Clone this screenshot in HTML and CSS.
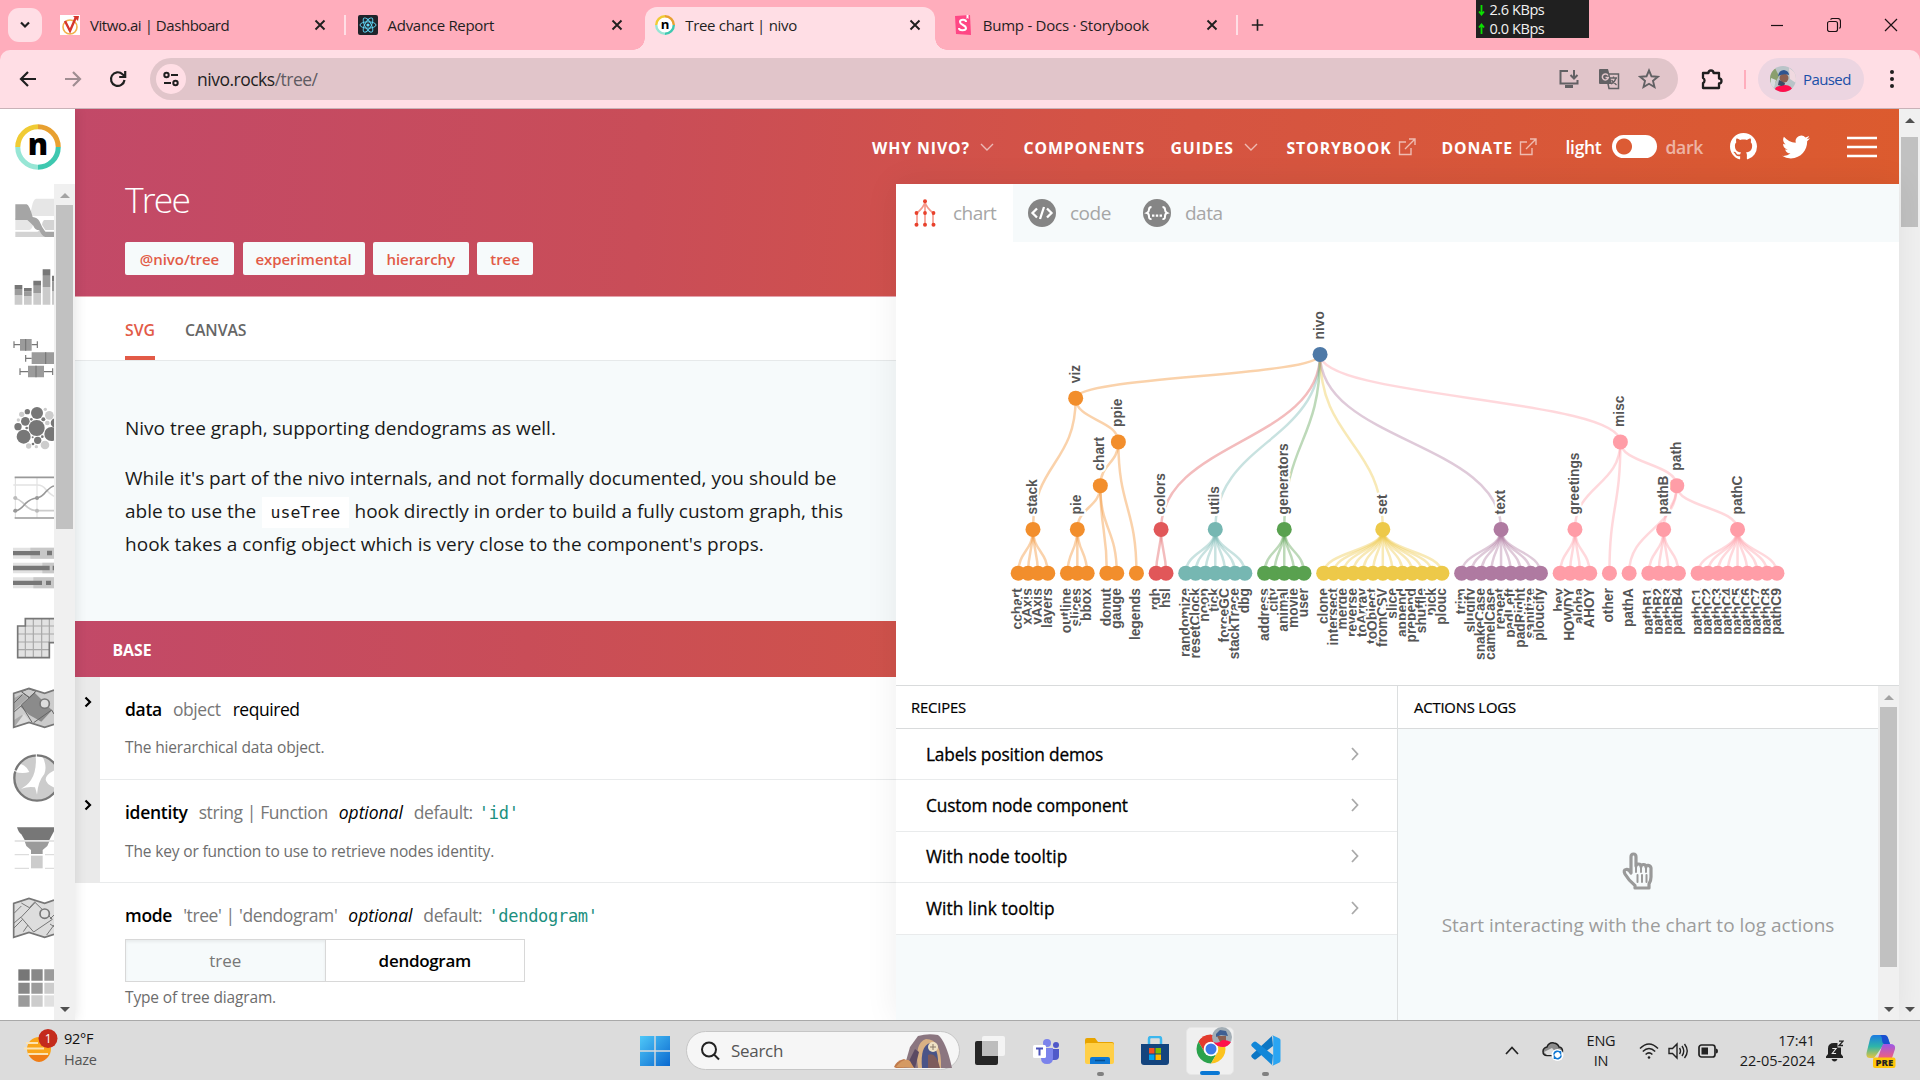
FILE: index.html
```html
<!DOCTYPE html>
<html lang="en">
<head>
<meta charset="utf-8">
<title>Tree chart | nivo</title>
<link rel="stylesheet" href="styles.css">
</head>
<body>
<div class="screen">

<!-- Tab strip -->
<header class="tabstrip">
  <div class="tab-search"><svg width="12" height="8" viewBox="0 0 12 8"><path d="M2 1.5l4 4 4-4" fill="none" stroke="#1f1f1f" stroke-width="2.2"/></svg></div>
  <div class="tab">
    <svg class="fav" viewBox="0 0 20 20"><rect width="20" height="20" fill="#fff"/><circle cx="10" cy="12" r="7" fill="none" stroke="#f2b04a" stroke-width="1.6"/><path d="M5 6l5 10 6-14" fill="none" stroke="#d5352c" stroke-width="2.4"/><path d="M13 1l6 0-1 5z" fill="#d5352c"/></svg>
    <span class="tab-title t1">Vitwo.ai | Dashboard</span>
    <svg class="x" viewBox="0 0 12 12"><path d="M1.5 1.5l9 9M10.500 1.500l-9 9"/></svg>
    <i class="sep"></i>
  </div>
  <div class="tab">
    <svg class="fav" viewBox="0 0 20 20"><rect width="20" height="20" rx="2" fill="#20232a"/><g fill="none" stroke="#61dafb" stroke-width=".9"><ellipse cx="10" cy="10" rx="8" ry="3.200"/><ellipse cx="10" cy="10" rx="8" ry="3.2" transform="rotate(60 10 10)"/><ellipse cx="10" cy="10" rx="8" ry="3.2" transform="rotate(120 10 10)"/></g><circle cx="10" cy="10" r="1.6" fill="#61dafb"/></svg>
    <span class="tab-title t2">Advance Report</span>
    <svg class="x" viewBox="0 0 12 12"><path d="M1.5 1.5l9 9M10.5 1.5l-9 9"/></svg>
  </div>
  <div class="tab active">
    <svg class="fav" viewBox="0 0 50 50"><circle cx="25" cy="25" r="20" fill="#fff"/><g fill="none" stroke-width="6"><path d="M3 25A22 22 0 0 1 25 3" stroke="#f0cb34"/><path d="M25 3A22 22 0 0 1 47 25" stroke="#e8a030"/><path d="M47 25A22 22 0 0 1 25 47" stroke="#3ec8b0"/><path d="M25 47A22 22 0 0 1 3 25" stroke="#97e6d5"/></g><text x="25" y="35" class="logo-n">n</text></svg>
    <span class="tab-title t3">Tree chart | nivo</span>
    <svg class="x" viewBox="0 0 12 12"><path d="M1.5 1.5l9 9M10.5 1.5l-9 9"/></svg>
  </div>
  <div class="tab">
    <svg class="fav" viewBox="0 0 20 20"><path d="M2 1l15-1 1 20-15-1z" fill="#ff4785"/><path d="M13.500 0h2v4l-1-1-1 1z" fill="#fff"/><path d="M13 7c0-3-6-3-6 0s6 3 6 6-7 3-7 0" fill="none" stroke="#fff" stroke-width="2"/></svg>
    <span class="tab-title t4">Bump - Docs · Storybook</span>
    <svg class="x" viewBox="0 0 12 12"><path d="M1.5 1.5l9 9M10.5 1.5l-9 9"/></svg>
    <i class="sep"></i>
  </div>
  <svg class="plus" width="16" height="16" viewBox="0 0 16 16"><path d="M8 1v14M1 8h14" stroke="#1f1f1f" stroke-width="2"/></svg>
  <div class="net">
    <div><svg width="7" height="12" viewBox="0 0 7 12"><path d="M3.500 1v9M1 7.500l2.500 3L6 7.500"/></svg><span>2.6 KBps</span></div>
    <div><svg width="7" height="12" viewBox="0 0 7 12"><path d="M3.500 11V2M1 4.500l2.500-3L6 4.500"/></svg><span>0.0 KBps</span></div>
  </div>
  <div class="win">
    <svg width="14" height="14" viewBox="0 0 14 14"><path d="M1 7.500h12"/></svg>
    <svg width="14" height="14" viewBox="0 0 14 14"><rect x=".5" y="3.500" width="10" height="10" rx="2"/><path d="M3.500 1.500q1-1 2-1h5q3 0 3 3v5q0 1-1 2"/></svg>
    <svg width="14" height="14" viewBox="0 0 14 14"><path d="M1 1l12 12M13 1L1 13"/></svg>
  </div>
</header>

<!-- Address bar -->
<div class="toolbar">
  <div class="navbtns">
    <svg width="20" height="20" viewBox="0 0 20 20"><path d="M18 10H3M10 3l-7 7 7 7"/></svg>
    <svg class="dim" width="20" height="20" viewBox="0 0 20 20"><path d="M2 10h15M10 3l7 7-7 7"/></svg>
    <svg width="20" height="20" viewBox="0 0 20 20"><path d="M16.500 11A6.800 6.800 0 1 1 14.500 5.200L17 7.500M17.200 2v6h-6"/></svg>
  </div>
  <div class="omnibox">
    <div class="site"><svg width="18" height="18" viewBox="0 0 18 18" fill="none" stroke="#1f1f1f" stroke-width="2"><circle cx="4.500" cy="5" r="2.200"/><path d="M9 5h7M2 13h7"/><circle cx="13.500" cy="13" r="2.200"/></svg></div>
    <div class="url">nivo.rocks<span>/tree/</span></div>
    <div class="omni-icons">
      <svg width="22" height="20" viewBox="0 0 22 20" fill="none" stroke="#626164" stroke-width="2"><path d="M10 2H2.500v12.500h17V11M16 1v8M12.500 6l3.500 3.500L19.500 6"/><path d="M7 17.500h8" stroke-width="3"/></svg>
      <svg width="22" height="22" viewBox="0 0 22 22"><path d="M8 6h12.500v14.500H11z" fill="none" stroke="#626164" stroke-width="1.5"/><path d="M1 2q0-1 1-1h8l4 15H2q-1 0-1-1z" fill="#626164"/><path d="M10 7.500a3 3 0 1 0 .3 2H7.500" stroke="#e1c5ca" stroke-width="1.500" fill="none"/><path d="M12 10h7M15.500 8.500V10M18 10q-1 4-5 6M13.500 12l5 5" stroke="#626164" stroke-width="1.3" fill="none"/></svg>
      <svg width="22" height="22" viewBox="0 0 22 22"><path d="M11 2.500l2.500 5.800 6.300.5-4.800 4.100 1.500 6.200L11 15.800l-5.500 3.300L7 12.900 2.200 8.800l6.300-.5z" fill="none" stroke="#626164" stroke-width="1.900"/></svg>
    </div>
  </div>
  <svg class="ext" width="24" height="24" viewBox="0 0 24 24"><path d="M3 6h5.500a2.500 2.500 0 0 1 5 0H19v5.500a2.500 2.500 0 0 1 0 5V21H3v-5a2.800 2.800 0 0 0 0-5z" fill="none" stroke="#1f1f1f" stroke-width="2.300" stroke-linejoin="round"/></svg>
  <i class="tsep"></i>
  <div class="profile">
    <svg width="26" height="26" viewBox="0 0 26 26"><defs><clipPath id="av"><circle cx="13" cy="13" r="13"/></clipPath></defs><g clip-path="url(#av)"><rect width="26" height="26" fill="#b9c4c8"/><path d="M0 6l5-4 4 8-5 9-4-3z" fill="#8a9f6e"/><path d="M1 12l5 2-2 8-4-3z" fill="#d9dde0"/><path d="M19 2l7 5v10l-6-4z" fill="#f0d9e0"/><circle cx="14" cy="12" r="4.500" fill="#8b5f50"/><path d="M8 10q1-6 6-6 5 1 5 5-5-2-11 1z" fill="#2f5590"/><path d="M9 14l6 3-1 4-6-2z" fill="#3c4c63"/><path d="M4 26q1-7 7-6l4-1q7 0 8 7z" fill="#ff0f4c"/></g></svg>
    <span>Paused</span>
  </div>
  <svg class="kebab" width="6" height="20" viewBox="0 0 6 20"><circle cx="3" cy="3" r="2"/><circle cx="3" cy="10" r="2"/><circle cx="3" cy="17" r="2"/></svg>
</div>

<!-- Page -->
<main class="page">
  <aside class="side">
    <div class="logo"><svg width="46" height="46" viewBox="0 0 50 50"><g fill="none" stroke-width="5.500"><path d="M3 25A22 22 0 0 1 25 3" stroke="#f0cb34"/><path d="M25 3A22 22 0 0 1 47 25" stroke="#e8a030"/><path d="M47 25A22 22 0 0 1 25 47" stroke="#3ec8b0"/><path d="M25 47A22 22 0 0 1 3 25" stroke="#97e6d5"/></g><text x="25" y="34" class="logo-n big">n</text></svg></div>
    <div class="side-scroll">
      <div class="thumbs">
        <svg viewBox="0 12 162 210"><path d="M80 108q12-2 16-30 4-20 12-22h54v52z" fill="#e6e6e6"/><path d="M46 114h40q10 0 14 17-4 19-14 19H46z" fill="#e6e6e6"/><path d="M162 120h-30q-6 6-6 14l10 16h26z" fill="#d3d3d3"/><path d="M46 155h66l12-6 12 6 26 6v10H46z" fill="#d3d3d3"/><path d="M46 73h34q8 2 18 38 14 2 20 12 8 20 18 32h26v16h-26q-10-2-18-20-14-2-18-14-10-10-18-17H46z" fill="#a5a5a5"/></svg>
        <svg viewBox="0 222 162 210"><g fill="#cbcbcb"><path d="M44 346h23v28H44zM72 348h23v26H72zM100 339h23v35h-23zM128 321h23v53h-23zM156 334h6v40h-6z"/></g><g fill="#9b9b9b"><path d="M44 327h23v19H44zM72 334h23v14H72zM100 317h23v22h-23zM128 287h23v34h-23zM156 304h6v30h-6z"/></g><g fill="#777"><path d="M44 315h23v12H44zM72 324h23v10H72zM100 302h23v15h-23zM128 268h23v19h-23zM156 287h6v17h-6z"/></g></svg>
        <svg viewBox="0 432 162 210"><g fill="#9b9b9b"><path d="M60 477h35v35H60zM95 517h67v35H95zM84 557h48v35H84z"/></g><path d="M42 484v20M42 494h18M112 484v20M95 494h17M77 525v20M77 535h18M60 565v20M60 575h24M158 565v20M132 575h26M77 477v35M137 517v35M108 557v35" stroke="#777" stroke-width="3.500"/></svg>
        <svg viewBox="0 642 162 210"><g fill="#777"><circle cx="110" cy="744" r="24"/><circle cx="111" cy="699" r="18"/><circle cx="71" cy="770" r="21"/><circle cx="154" cy="762" r="21"/><circle cx="76" cy="724" r="13"/><circle cx="54" cy="740" r="11"/><circle cx="82" cy="695" r="8"/><circle cx="113" cy="781" r="11"/><circle cx="166" cy="729" r="14"/><circle cx="130" cy="718" r="6"/><circle cx="80" cy="744" r="4"/><circle cx="94" cy="718" r="4"/><circle cx="127" cy="770" r="4"/><circle cx="99" cy="792" r="4"/><circle cx="98" cy="772" r="3"/></g><g fill="#ccc"><circle cx="148" cy="706" r="13"/><circle cx="65" cy="703" r="8"/><circle cx="135" cy="795" r="13"/><circle cx="136" cy="688" r="5"/><circle cx="86" cy="798" r="8"/><circle cx="109" cy="800" r="5"/><circle cx="142" cy="729" r="7"/><circle cx="55" cy="720" r="5"/></g></svg>
        <svg viewBox="0 852 162 210"><g fill="none"><path d="M46 892v122M111 892v122" stroke="#ddd" stroke-width="3"/><path d="M40 915h72q16 0 26 14 12 14 24 20" stroke="#e2e2e2" stroke-width="5"/><path d="M40 954q16 0 36 22 16 16 35 16h51" stroke="#ccc" stroke-width="5"/><path d="M40 993q16 2 36-22 16-16 35-17 14-2 28-20 14-14 23-16" stroke="#999" stroke-width="5"/><path d="M44 892h118M44 1014h118" stroke="#999" stroke-width="5"/></g><g fill="#bbb"><circle cx="46" cy="954" r="6"/><circle cx="111" cy="992" r="6"/></g><g fill="#999"><circle cx="46" cy="992" r="6"/><circle cx="111" cy="954" r="6"/></g></svg>
        <svg viewBox="0 1062 162 210"><path d="M39 1103h123v33H39zM39 1148h123v32H39zM39 1192h123v33H39z" fill="#e2e2e2"/><path d="M91 1103h71v33H91zM127 1148h35v32h-35zM100 1192h62v33h-62z" fill="#c8c8c8"/><path d="M39 1113h81v13H39zM141 1112h15v14h-15zM39 1157h110v14H39zM158 1157h4v14h-4zM39 1202h87v13H39zM138 1202h15v13h-15z" fill="#777"/></svg>
        <svg viewBox="0 42 162 210"><path d="M76 85h86v73h-14v45H53v-96h23z" fill="#e2e2e2"/><path d="M76 108h86M53 132h109M53 156h95M53 179h95M76 108v95M100 86v117M125 86v117M148 86v72" stroke="#a8a8a8" stroke-width="3.500"/><path d="M162 86H76v22H53v95h95v-45h14" fill="none" stroke="#777" stroke-width="5"/></svg>
        <svg viewBox="0 252 162 210"><path d="M41 310l46-15 47 15 28-10v103l-28 9-47-15-46 15z" fill="#ccc"/><path d="M64 345l40-37 52 53-32 34-37-21-25-24z" fill="#8b8b8b"/><path d="M41 325l26-14 16 12-42 40zM66 375l20 22-44 14V390z" fill="#aaa"/><path d="M72 372l22 26-50 12z" fill="#ddd"/><path d="M64 305l22-9 22 8-20 18zM42 366l22-19M41 340l26-26M64 345l40-37M64 345l32 52M155 360l-54 38M155 360l7 12M70 310l18 14 17-18" fill="none" stroke="#666" stroke-width="3"/><path d="M162 300l-28 10-47-15-46 15v102l46-15 47 15 28-9" fill="none" stroke="#777" stroke-width="5"/><circle cx="134" cy="341" r="14" fill="#ddd" stroke="#777" stroke-width="5"/></svg>
        <svg viewBox="0 462 162 210"><circle cx="111" cy="564" r="68" fill="#ccc"/><path d="M107 494q4 50-14 76-12 18-30 26 24-8 42-4 4 12 6 22 3-40 22-62 10-24-8-58zM48 520q28 0 40 26-18 6-44 0zM165 540q-28 14-28 28t28 26z" fill="#fff"/><circle cx="111" cy="564" r="68" fill="none" stroke="#777" stroke-width="7"/><path d="M109 490v14M40 541l14 4" stroke="#fff" stroke-width="3"/></svg>
        <svg viewBox="0 672 162 210"><path d="M51 712h111v12l-14 26H74L64 733q-8-5-13-21z" fill="#777"/><path d="M74 754h74l-6 14-14 12v12H93v-12l-14-12z" fill="#9b9b9b"/><path d="M93 797h35v38H93z" fill="#ccc"/><path d="M44 753h118M44 794h43M44 835h43M135 794h27M135 835h27" stroke="#ddd" stroke-width="4"/></svg>
        <svg viewBox="0 882 162 210"><path d="M41 940l46-15 47 15 28-10v103l-28 9-47-15-46 15z" fill="#ddd"/><path d="M64 939l24 14 17-18M105 938l-42 44 38 44 56-38-53-52M42 970l22-22M41 1000l22-19M42 1014l26-26M70 1025l14-20M162 975l-12 12M162 1010l-12-8M140 1035l22-30" fill="none" stroke="#777" stroke-width="3"/><path d="M162 930l-28 10-47-15-46 15v102l46-15 47 15 28-9" fill="none" stroke="#777" stroke-width="5"/><circle cx="134" cy="971" r="14" fill="#e2e2e2" stroke="#777" stroke-width="5"/></svg>
        <svg viewBox="0 1092 162 210"><path d="M55 1138h34v34H55z" fill="#777"/><path d="M94 1138h34v34H94zM55 1178h34v33H55z" fill="#888"/><path d="M133 1138h29v34h-29zM94 1178h34v33H94zM55 1216h34v34H55z" fill="#9b9b9b"/><path d="M133 1178h29v33h-29zM94 1216h34v34H94z" fill="#ccc"/><path d="M133 1216h29v34h-29z" fill="#e0e0e0"/></svg>
      </div>
      <div class="bar"><i class="up dimmed"></i><i class="thumb side-thumb"></i><i class="down"></i></div>
    </div>
  </aside>

  <div class="site-body">
    <nav class="topnav">
      <span class="nv n1">WHY NIVO?<svg width="14" height="8" viewBox="0 0 14 8"><path d="M1 1l6 6 6-6"/></svg></span>
      <span class="nv n2">COMPONENTS</span>
      <span class="nv n3">GUIDES<svg width="14" height="8" viewBox="0 0 14 8"><path d="M1 1l6 6 6-6"/></svg></span>
      <span class="nv n4">STORYBOOK<svg width="18" height="18" viewBox="0 0 18 18"><path d="M8 4H1.500v12.500H13V10M7 11L16.500 1.500M11 1h6v6"/></svg></span>
      <span class="nv n5">DONATE<svg width="18" height="18" viewBox="0 0 18 18"><path d="M8 4H1.500v12.500H13V10M7 11L16.500 1.500M11 1h6v6"/></svg></span>
      <span class="theme"><b>light</b><i class="switch"></i><b class="off">dark</b></span>
      <svg class="gh" width="27" height="27" viewBox="0 0 16 16"><path fill="#fff" d="M8 0C3.580 0 0 3.580 0 8c0 3.540 2.290 6.530 5.470 7.590.4.070.55-.17.55-.38 0-.19-.01-.82-.01-1.490-2.010.37-2.530-.49-2.690-.94-.09-.23-.48-.94-.82-1.130-.28-.15-.68-.52-.01-.53.63-.01 1.080.58 1.230.82.72 1.210 1.870.87 2.330.66.07-.52.28-.87.51-1.070-1.780-.2-3.640-.89-3.640-3.950 0-.87.31-1.590.82-2.150-.08-.2-.36-1.020.08-2.120 0 0 .67-.21 2.200.82.64-.18 1.320-.27 2-.27s1.360.09 2 .27c1.530-1.040 2.200-.82 2.200-.82.44 1.100.16 1.920.08 2.120.51.56.82 1.270.82 2.150 0 3.070-1.870 3.750-3.650 3.950.29.25.54.73.54 1.480 0 1.070-.01 1.930-.01 2.200 0 .21.15.46.55.38A8.010 8.010 0 0 0 16 8c0-4.420-3.580-8-8-8z"/></svg>
      <svg class="tw" width="28" height="28" viewBox="0 0 24 24"><path fill="#fff" d="M23.950 4.570a10 10 0 0 1-2.820.77 4.960 4.960 0 0 0 2.160-2.720c-.95.550-2 .95-3.130 1.180a4.920 4.920 0 0 0-8.380 4.480C7.690 8.090 4.070 6.130 1.640 3.160a4.820 4.820 0 0 0-.67 2.480c0 1.710.87 3.210 2.190 4.100a4.900 4.900 0 0 1-2.230-.62v.06a4.920 4.920 0 0 0 3.950 4.830 5 5 0 0 1-2.210.08 4.940 4.940 0 0 0 4.600 3.420A9.870 9.870 0 0 1 0 19.540a13.990 13.990 0 0 0 7.550 2.210c9.050 0 14-7.500 14-13.980 0-.21 0-.42-.02-.63a9.940 9.940 0 0 0 2.460-2.550z"/></svg>
      <svg class="burger" width="30" height="22" viewBox="0 0 30 22"><path d="M0 2h30M0 11h30M0 20h30" stroke="#fff" stroke-width="2.400"/></svg>
    </nav>

    <div class="columns">
      <section class="left">
        <div class="hero">
          <h1>Tree</h1>
          <div class="tags"><span class="g1">@nivo/tree</span><span class="g2">experimental</span><span class="g3">hierarchy</span><span class="g4">tree</span></div>
        </div>
        <div class="variants"><span class="on">SVG</span><span class="cv">CANVAS</span></div>
        <div class="intro">
          <p class="p1">Nivo tree graph, supporting dendograms as well.</p>
          <p class="p2"><span class="l1">While it's part of the nivo internals, and not formally documented, you should be</span><br><span class="l2">able to use the </span><code>useTree</code><span class="l3"> hook directly in order to build a fully custom graph, this</span><br><span class="l4">hook takes a config object which is very close to the component's props.</span></p>
        </div>
        <div class="group">BASE</div>
        <div class="prop gutter">
          <svg class="chev" width="8" height="12" viewBox="0 0 8 12"><path d="M1.500 1.500L6 6l-4.500 4.500"/></svg>
          <div class="prop-body">
            <div class="sig d1"><b>data</b><span>object</span><em class="req">required</em></div>
            <p>The hierarchical data object.</p>
          </div>
        </div>
        <div class="prop gutter">
          <svg class="chev" width="8" height="12" viewBox="0 0 8 12"><path d="M1.500 1.500L6 6l-4.500 4.500"/></svg>
          <div class="prop-body second">
            <div class="sig"><b>identity</b><span>string | Function</span><em>optional</em><span>default: <code>'id'</code></span></div>
            <p>The key or function to use to retrieve nodes identity.</p>
          </div>
        </div>
        <div class="prop last">
          <div class="prop-body">
            <div class="sig"><b>mode</b><span>'tree' | 'dendogram'</span><em>optional</em><span>default: <code>'dendogram'</code></span></div>
            <div class="choice"><span>tree</span><b>dendogram</b></div>
            <p>Type of tree diagram.</p>
          </div>
        </div>
      </section>

      <section class="right">
        <div class="ptabs">
          <div class="ptab on"><svg width="22" height="28" viewBox="0 0 22 28"><path d="M11 3v22M11 3Q10 8 3 14v11M11 3q1 5 8 11v11" fill="none" stroke="#f5988b" stroke-width="1.600"/><g fill="#e8412c"><circle cx="11" cy="2.300" r="2"/><circle cx="2.500" cy="14" r="1.900"/><circle cx="11" cy="14" r="1.900"/><circle cx="19.500" cy="14" r="1.900"/><circle cx="2.500" cy="25.800" r="2"/><circle cx="11" cy="25.800" r="2"/><circle cx="19.500" cy="25.800" r="2"/></g></svg><span>chart</span></div>
          <div class="ptab"><svg width="28" height="28" viewBox="0 0 28 28"><circle cx="14" cy="14" r="14" fill="#858585"/><path d="M9 9.500L4.500 14 9 18.500M19 9.500l4.500 4.500-4.500 4.500M16 8l-4 12" fill="none" stroke="#fff" stroke-width="2.300"/></svg><span>code</span></div>
          <div class="ptab"><svg width="28" height="28" viewBox="0 0 28 28"><circle cx="14" cy="14" r="14" fill="#858585"/><path d="M8.500 8Q6 8 6 10.500T4 14q2 .5 2 3.500t2.500 2.500M19.500 8Q22 8 22 10.500T24 14q-2 .5-2 3.500t-2.500 2.500" fill="none" stroke="#fff" stroke-width="2"/><path d="M9 15.500h2.400v2.300H9zM12.800 15.500h2.400v2.300h-2.400zM16.600 15.500H19v2.300h-2.400z" fill="#fff"/></svg><span>data</span></div>
        </div>
        <div class="chart"><svg id="tree" width="1003" height="443" viewBox="896 242 1003 443"></svg></div>
        <div class="bottom">
          <div class="recipes">
            <h2>RECIPES</h2>
            <div class="recipe"><span class="r1">Labels position demos</span><svg width="8" height="14" viewBox="0 0 8 14"><path d="M1 1l5.500 6L1 13"/></svg></div>
            <div class="recipe"><span class="r2">Custom node component</span><svg width="8" height="14" viewBox="0 0 8 14"><path d="M1 1l5.500 6L1 13"/></svg></div>
            <div class="recipe"><span class="r3">With node tooltip</span><svg width="8" height="14" viewBox="0 0 8 14"><path d="M1 1l5.500 6L1 13"/></svg></div>
            <div class="recipe"><span class="r4">With link tooltip</span><svg width="8" height="14" viewBox="0 0 8 14"><path d="M1 1l5.500 6L1 13"/></svg></div>
          </div>
          <div class="logs">
            <h2>ACTIONS LOGS</h2>
            <div class="empty">
              <svg width="34" height="38" viewBox="0 0 34 38" fill="none" stroke="#999" stroke-linejoin="round" stroke-linecap="round"><path d="M10 21V5q0-3 2.500-3T15 5v9q0-2 2.500-2t2.500 2.500q0-2 2.500-2T25 15q0-2 2.300-1.700T30 16v9q0 4-2 7v4H14v-2.500Q8 29 4 22q-2-4 1-4.500 3-.5 5 3.500z" stroke-width="3.200"/><path d="M15 14v6M20 15v5M25 16v4M16.500 23v7M21 23v7M25.500 23v7" stroke-width="2"/></svg>
              <span>Start interacting with the chart to log actions</span>
            </div>
          </div>
          <div class="bar"><i class="up dimmed"></i><i class="thumb log-thumb"></i><i class="down"></i></div>
        </div>
      </section>
    </div>
  </div>
  <div class="bar outer"><i class="up"></i><i class="thumb page-thumb"></i><i class="down"></i></div>
</main>

<!-- Taskbar -->
<footer class="taskbar">
  <div class="weather">
    <svg width="36" height="36" viewBox="0 0 36 36"><circle cx="15" cy="20" r="12" fill="#f9a51a"/><path d="M2 14h12M0 19.500h20M4 25h20" stroke="#fbe3b4" stroke-width="2.200"/><path d="M5 26h20q-4 7-10 7T5 26z" fill="#f07d16"/><circle cx="24" cy="9.500" r="9.500" fill="#c42b1c"/><text x="24" y="14" class="badge">1</text></svg>
    <div><span>92°F</span><span class="gray">Haze</span></div>
  </div>
  <div class="apps">
    <svg width="30" height="30" viewBox="0 0 30 30"><defs><linearGradient id="w" x2="1" y2="1"><stop stop-color="#4fc8f8"/><stop offset="1" stop-color="#0a68cf"/></linearGradient></defs><path d="M0 0h14.300v14.300H0zM15.700 0H30v14.300H15.700zM0 15.700h14.300V30H0zM15.700 15.700H30V30H15.700z" fill="url(#w)"/></svg>
    <div class="search">
      <svg width="20" height="20" viewBox="0 0 20 20" fill="none" stroke="#222" stroke-width="2"><circle cx="9" cy="8.500" r="7"/><path d="M14 13.500l5 5"/></svg>
      <span>Search</span>
      <svg class="art" width="58" height="36" viewBox="0 0 58 36"><path d="M0 34q2-6 10-8l8 4v5H2z" fill="#c07a4c"/><path d="M10 35L16 14 24 3q10-3 20-1 8 6 14 33z" fill="#8b7680"/><path d="M24 35Q20 10 32 6q16 0 15 29z" fill="#d9b184"/><path d="M28 35Q26 13 36 10q9 4 8 25z" fill="#4a5488"/><path d="M34 35V22q8-4 12 13z" fill="#7d5b5c"/><circle cx="39" cy="14" r="5" fill="#efe2c4"/><path d="M36 14h6M39 11v6" stroke="#8a7a6a"/><path d="M14 30l7-14 4 3-4 16z" fill="#5c4a63"/><path d="M2 34q8-10 14-6l4 7z" fill="#d59a63"/></svg>
    </div>
    <svg width="30" height="30" viewBox="0 0 30 30"><rect y="5" width="23" height="24" rx="2" fill="#262626"/><rect x="7" y="0" width="23" height="20" rx="2" fill="#f4f4f4"/><rect x="7" y="5" width="16" height="15" fill="#bdbdbd"/></svg>
    <svg width="28" height="28" viewBox="0 0 28 28"><circle cx="15" cy="6" r="4" fill="#7b83eb"/><circle cx="24" cy="8" r="3" fill="#5059c9"/><path d="M20 12h7v7q0 4-4 4h-3z" fill="#5059c9"/><path d="M9 11h12v10q0 6-6 6t-6-6z" fill="#7b83eb"/><rect x="1" y="8" width="13" height="13" rx="1.500" fill="#fff"/><path d="M4 11.500h7M7.500 11.500v7" stroke="#4b53bc" stroke-width="2"/></svg>
    <div class="app"><svg width="32" height="28" viewBox="0 0 32 28"><path d="M1 3q0-2 2-2h8l3 4h14q2 0 2 2v5H1z" fill="#e8a400"/><rect x="1" y="6" width="29" height="21" rx="2" fill="#ffcf48"/><path d="M6 27v-5q0-2 2-2h16q2 0 2 2v5z" fill="#0f78d4"/><path d="M11 23.500h10" stroke="#064d8f" stroke-width="1.500"/></svg><i class="run"></i></div>
    <svg width="30" height="30" viewBox="0 0 30 30"><path d="M9 8V3q0-2 2-2h8q2 0 2 2v5" fill="none" stroke="#3cb7ee" stroke-width="2.500"/><path d="M1 8h28v18q0 3-3 3H4q-3 0-3-3z" fill="#13447e"/><path d="M9 12h5.500v5.500H9z" fill="#f25022"/><path d="M15.500 12H21v5.500h-5.500z" fill="#7fba00"/><path d="M9 18.500h5.500V24H9z" fill="#00a4ef"/><path d="M15.500 18.500H21V24h-5.500z" fill="#ffb900"/></svg>
    <div class="app current"><svg width="38" height="38" viewBox="0 0 38 38"><path d="M16 23L3.500 16A14.500 14.500 0 0 1 28.500 16z" fill="#e33b2e"/><path d="M16 8.500A14.500 14.500 0 0 0 3.450 15.750L10 27z" fill="#e33b2e"/><path d="M3.450 15.750A14.500 14.500 0 0 0 16 37.500L22.300 26.600 9.700 26.600z" fill="#2ba24c"/><path d="M28.550 15.750A14.500 14.500 0 0 1 16 37.500l6.300-10.900V15.750z" fill="#fcc31e"/><path d="M28.550 15.750H16v4h10z" fill="#e33b2e"/><circle cx="16" cy="23" r="7.300" fill="#fff"/><circle cx="16" cy="23" r="5.500" fill="#3b7be8"/><g><circle cx="27" cy="11" r="10" fill="#a3aeb6"/><path d="M21 8l4-4 6 1 2 5-7-1-5 2z" fill="#3f5f92"/><path d="M22 10h9v5l-5 3z" fill="#8b5f50"/><path d="M18.500 16q5 2 9-2 5 0 8.500 2-3 5-8 5-6 0-9.500-5z" fill="#ff0f4c"/></g></svg><i class="run wide"></i></div>
    <div class="app"><svg width="31" height="31" viewBox="0 0 31 31"><path d="M22 1l-20 18.500q-1.500 1.500 0 3l1.700 1.500q1.300 1 2.600 0L23 11z" fill="#0b76c4"/><path d="M22 30L2 11.500q-1.500-1.500 0-3L3.700 7q1.300-1 2.600 0L23 20z" fill="#1287d8"/><path d="M22 0l7.500 3.500q1 .6 1 1.800v20.400q0 1.200-1 1.800L22 31q1.200-.8 1.200-2.500v-26Q23.200.8 22 0z" fill="#2ba5f2"/></svg><i class="run"></i></div>
  </div>
  <div class="tray">
    <svg width="14" height="9" viewBox="0 0 14 9"><path d="M1 8l6-6.500L13 8" fill="none" stroke="#222" stroke-width="1.700"/></svg>
    <svg width="22" height="20" viewBox="0 0 22 20"><path d="M5 14.500q-4 0-4-4Q1 7 5 6q2-5 7-4 4 .6 5 4 3.500.5 3.500 4 0 4.500-4 4.500z" fill="#8d8d8d" stroke="#222" stroke-width="1.500"/><path d="M2 11l8-4 6 7H5z" fill="#ddd"/><circle cx="15.500" cy="14" r="6" fill="#fff"/><path d="M12 13.500a3.500 3.500 0 0 1 6.500-1.500V10M19 14.500a3.500 3.500 0 0 1-6.500 1.500v2" fill="none" stroke="#1178d3" stroke-width="1.600"/></svg>
    <div class="lang"><span>ENG</span><span>IN</span></div>
    <svg width="20" height="18" viewBox="0 0 20 18" fill="none" stroke="#222" stroke-width="1.500"><path d="M1 6.500q9-9 18 0M3.800 9.500q6.200-6 12.400 0M6.600 12.500q3.400-3.200 6.800 0"/><circle cx="10" cy="15.500" r="1.300" fill="#222" stroke="none"/></svg>
    <svg width="21" height="18" viewBox="0 0 21 18" fill="none" stroke="#222" stroke-width="1.400"><path d="M1 6.500h3.500L9 2v14l-4.500-4.500H1zM11.500 6q2 3 0 6M14 4q3.500 5 0 10M16.500 2q5.500 7 0 14"/></svg>
    <svg width="20" height="14" viewBox="0 0 20 14"><rect x="1" y="1" width="16" height="12" rx="2.500" fill="none" stroke="#222" stroke-width="1.700"/><path d="M3.500 3.500H10v7H3.500zM18 4.500q2 0 2 2.500t-2 2.500z" fill="#222"/></svg>
    <div class="clock"><span>17:41</span><span class="date">22-05-2024</span></div>
    <svg width="18" height="22" viewBox="0 0 18 22"><path d="M0 16.500l2-2.500V8.500Q2 3 8 3h3.500v4.500H15V14l2 2.500V18H0z" fill="#222"/><path d="M5.500 19h6q-1 2.500-3 2.500t-3-2.500z" fill="#222"/><path d="M13 1.200h4l-4 4.300h4" fill="none" stroke="#222" stroke-width="1.300"/><path d="M6.300 8.500h3.800L6.300 13.500h3.800" fill="none" stroke="#e8e8e8" stroke-width="1.100"/></svg>
    <svg class="copilot" width="30" height="34" viewBox="0 0 30 34"><defs><linearGradient id="c1" y2="1" x2="0"><stop stop-color="#1b7be2"/><stop offset=".5" stop-color="#2fb5a8"/><stop offset="1" stop-color="#e8c53c"/></linearGradient><linearGradient id="c2" y2="1" x2="0"><stop stop-color="#9b57e8"/><stop offset="1" stop-color="#f0607c"/></linearGradient></defs><path d="M8 1h10q3 0 4 3l2 6h-6l-7 10-3 4H4q-5 0-3-7L4 5q1-4 4-4z" fill="url(#c1)"/><path d="M14 1h4q3 0 4 3l2 6h-6q-2-1-2-4 0-4-2-5z" fill="#1a4fd0"/><path d="M18 10h6q6 0 5 5l-3 9H12l4-12q1-2 2-2z" fill="url(#c2)"/><rect x="7" y="23.500" width="22.500" height="10.500" rx="2" fill="#ffc60a"/><text x="18.300" y="32.400" class="pre">PRE</text></svg>
  </div>
</footer>
</div>
<script src="tree.js"></script>
</body>
</html>
```
FILE: styles.css
```css
* { box-sizing: border-box; }
body { margin: 0; font-family: "Open Sans", "Noto Sans", sans-serif; color: #000; overflow: hidden; }
p, h1, h2 { margin: 0; }
svg { display: block; flex: none; }
i, em { font-style: normal; }
.screen { width: 1920px; height: 1080px; display: flex; flex-direction: column; overflow: hidden; }

/* tab strip */
.tabstrip { height: 50px; flex: none; background: #ffadbc; display: flex; padding-left: 8px; box-shadow: 0 12px 0 #ffadbc; }
.tab-search { width: 34px; height: 34px; border-radius: 11px; background: #ffdee5; margin: 8px 6px 0 0; display: grid; place-items: center; }
.tab { width: 297.600px; flex: none; display: flex; align-items: center; padding: 0 0 0 12px; position: relative; white-space: nowrap; }
.fav { width: 20px; height: 20px; margin-right: 10px; }
.tab-title { font-size: 15px; color: #1f1f1f; letter-spacing: -.3px; flex: 1; }
.t1 { letter-spacing: -.45px; }
.t4 { letter-spacing: -.25px; }
.x { width: 12px; height: 12px; margin-right: 20px; }
.x path { stroke: #1f1f1f; stroke-width: 1.900; }
.sep { width: 2px; height: 20px; background: #ffdee5; }
.x + .sep { margin: 0 0 0 -2px; }
.tab.active::before { content: ""; position: absolute; z-index: 0; left: 2px; top: 7px; width: 290px; height: 43px; background: #ffdee5; border-radius: 12px 12px 0 0; }
.tab.active::after { content: ""; position: absolute; left: -10px; bottom: 0; width: 314px; height: 12px; background: radial-gradient(circle at 0 0, transparent 11.500px, #ffdee5 12px) 0 0 / 12px 12px no-repeat, radial-gradient(circle at 100% 0, transparent 11.500px, #ffdee5 12px) 100% 0 / 12px 12px no-repeat; }
.tab.active > * { position: relative; z-index: 1; }
.logo-n { font: 700 33px "Open Sans", sans-serif; text-anchor: middle; fill: #000; }
.logo-n.big { font-weight: 800; }
.plus { margin: 17px 0 0 13px; width: 13px; }
.net { width: 113px; height: 38px; flex: none; margin-left: 212px; background: #202020; color: #f2f2f2; font-size: 14.500px; letter-spacing: -.4px; }
.net div { height: 19px; display: flex; align-items: center; gap: 4px; padding-left: 2px; line-height: 19px; }
.net svg { fill: none; stroke: #0be000; stroke-width: 1.800; }
.win { display: flex; gap: 43px; margin: 18px 0 0 181px; }
.win svg { fill: none; stroke: #1c1014; stroke-width: 1.200; }

/* toolbar */
.toolbar { height: 59px; flex: none; background: #ffdee5; border-radius: 10px 10px 0 0; border-bottom: 1px solid #c9b2b8; display: flex; align-items: center; position: relative; }
.navbtns { display: flex; gap: 25px; margin-left: 18px; width: 132px; }
.navbtns svg { fill: none; stroke: #1f1f1f; stroke-width: 2.200; }
.navbtns .dim { stroke: #a08d92; }
.omnibox { width: 1528px; height: 42px; border-radius: 21px; background: #e1c5ca; display: flex; align-items: center; padding-left: 6px; }
.site { width: 30px; height: 30px; border-radius: 50%; background: #ffdee5; display: grid; place-items: center; margin-right: 11px; }
.url { font-size: 17.500px; color: #1f1f1f; flex: 1; letter-spacing: -.5px; }
.url span { color: #5f5b62; }
.omni-icons { display: flex; gap: 18px; margin-right: 18px; align-items: center; }
.ext { margin-left: 22px; }
.tsep { width: 2px; height: 19px; background: #ffadbc; margin: 0 12px 0 20px; }
.profile { width: 106px; height: 42px; border-radius: 21px; background: #ecd5e1; display: flex; align-items: center; padding-left: 12px; gap: 7px; font-size: 15px; letter-spacing: -.6px; color: #1a4fa8; }
.kebab { margin-left: 25px; fill: #1f1f1f; }

/* page frame */
.page { height: 911px; flex: none; display: flex; background: #fff; overflow: hidden; }
.side { width: 75px; flex: none; display: flex; flex-direction: column; position: relative; z-index: 2; background: #fff; box-shadow: 0 0 12px rgba(0,0,0,.12); }
.logo { height: 75px; flex: none; display: flex; align-items: center; padding-left: 14.500px; }
.side-scroll { display: flex; height: 836px; overflow: hidden; }
.thumbs { width: 54px; flex: none; }
.thumbs svg { width: 54px; height: 70px; }
.bar { width: 21px; flex: none; background: #f0f0f0; display: flex; flex-direction: column; align-items: center; }
.bar .up, .bar .down { width: 0; height: 0; border: 5px solid transparent; flex: none; }
.bar .up { border-top: 0; border-bottom-color: #505050; margin: 9px 0 7px; }
.bar .up.dimmed { border-bottom-color: #a3a3a3; }
.bar .down { border-bottom: 0; border-top-color: #505050; margin-top: auto; margin-bottom: 8px; }
.bar .thumb { width: 17px; background: #c1c1c1; flex: none; }
.side-thumb { height: 324px; }
.log-thumb { height: 260px; }
.page-thumb { height: 90px; margin-top: 7px; }

.site-body { width: 1824px; flex: none; display: flex; flex-direction: column; background: linear-gradient(95deg, #c24968 0%, #c94d58 31%, #d45345 55%, #dc5b2e 100%) 0 0 / 1824px 240px no-repeat #fff; }
.topnav { height: 75px; flex: none; display: grid; grid-template-columns: 151.500px 147px 116px 155px 124px 164px 52px 65px 30px; padding-left: 797px; align-items: center; color: #fff; }
.nv { display: flex; align-items: center; font-size: 15.800px; font-weight: 700; letter-spacing: .92px; white-space: nowrap; padding-top: 3px; }
.nv svg { fill: none; stroke: #fff; stroke-width: 1.400; opacity: .6; margin: -3px 0 0 8px; }
.n1 svg { margin-left: 10px; }
.n3 svg { margin-left: 10px; }
.n4 svg, .n5 svg { margin-left: 6px; }
.theme { display: flex; align-items: center; font-size: 17.500px; }
.theme b { font-weight: 600; letter-spacing: -.3px; }
.theme .off { opacity: .55; }
.switch { width: 45px; height: 23px; border-radius: 12px; background: radial-gradient(circle at 12px 50%, #dc5b34 7.500px, #fff 8.500px); margin: 0 9px 0 10px; }

.columns { display: flex; height: 836px; }
.left { width: 821px; flex: none; display: flex; flex-direction: column; }
.hero { height: 113px; flex: none; padding-left: 50px; border-bottom: 1px solid #e4a3ac; }
h1 { font-size: 35.500px; font-weight: 300; line-height: 40px; margin-top: -5px; color: #fff; letter-spacing: -1.800px; }
.tags { display: flex; margin-top: 23px; gap: 8.500px; }
.tags span { height: 33px; background: #f6fafb; border-radius: 2px; color: #e25a47; font-size: 15px; font-weight: 600; line-height: 34px; text-align: center; letter-spacing: -.05px; }
.g1 { width: 109px; } .g2 { width: 122px; } .g3 { width: 95.500px; } .g4 { width: 56px; }
.variants { height: 64px; flex: none; background: #fff; padding-left: 50px; display: flex; gap: 30px; border-bottom: 1px solid #e6e9ea; font-size: 15.800px; font-weight: 600; line-height: 67px; letter-spacing: -.05px; color: #666; }
.variants .on { color: #e25a47; width: 30px; border-bottom: 4px solid #e25a47; height: 63px; }
.intro { height: 260px; flex: none; background: #f6fafb; padding: 51px 0 0 50px; font-size: 19px; line-height: 33px; color: #1a1a1a; white-space: nowrap; }
.l3 { letter-spacing: -.02px; }
.l4 { letter-spacing: .03px; }
.p2 { margin-top: 17px; }
.intro code { font: 16.500px "DejaVu Sans Mono", monospace; background: #fff; padding: 6px 8.500px; margin: 0 1px; }
.group { height: 56px; flex: none; padding-left: 37.500px; font-size: 15.800px; font-weight: 700; line-height: 58px; color: #fff; background: linear-gradient(90deg, #c24968 0%, #c94d58 55%, #cf524b 100%); }
.prop { display: flex; flex: none; background: #fff; height: 103px; }
.gutter { padding-left: 0; background: linear-gradient(90deg, #eaeaea 25px, #fff 25px); }
.chev { margin: 19px 4px 0 9px; width: 8px; fill: none; stroke: #000; stroke-width: 2.200; }
.gutter .prop-body { border-bottom: 1px solid #e9ebec; margin-left: 4px; padding-left: 25px; }
.prop-body { flex: 1; padding: 17px 0 0 50px; white-space: nowrap; }
.second p { padding-top: 2px; }
.last { height: 137px; }
.sig { display: flex; gap: 11px; font-size: 17.500px; line-height: 30px; color: #777; letter-spacing: -.4px; }
.sig b { font-weight: 600; color: #000; letter-spacing: -.3px; }
.sig em { color: #000; font-style: italic; letter-spacing: -.05px; }
.sig em.req { font-style: normal; letter-spacing: -.45px; margin-left: 1px; }
.sig code { font: 17px "DejaVu Sans Mono", monospace; letter-spacing: -.3px; color: #1c8f7e; margin-left: 2px; }
.prop p { font-size: 15.500px; line-height: 24px; margin-top: 11px; color: #6d6d6d; letter-spacing: -.15px; }
.second p { margin-top: 10px; }
.choice { display: flex; width: 400px; height: 43px; border: 1px solid #d8d8d8; margin-top: 9px; font-size: 17px; line-height: 41px; text-align: center; }
.choice span { flex: 1; background: #f6fafb; color: #777; border-right: 1px solid #d8d8d8; box-shadow: inset 0 2px 3px rgba(0,0,0,.06); }
.choice b { flex: 1; font-weight: 600; letter-spacing: -.3px; }
.prop.last p { margin-top: 3px; }

.right { width: 1003px; flex: none; display: flex; flex-direction: column; background: #fff; box-shadow: 0 0 32px rgba(0,0,0,.07); position: relative; }
.ptabs { height: 58px; flex: none; display: flex; background: #f6fafb; font-size: 19px; color: #a6a6a6; letter-spacing: -.5px; }
.ptab { display: flex; align-items: center; width: 115px; padding: 0 0 1px 15px; gap: 14px; }
.ptab.on { width: 117px; background: #fff; padding-left: 18px; gap: 17px; }
.chart { height: 443px; flex: none; }
.link { fill: none; stroke-width: 2.500; opacity: .4; }
.lbl { font: 700 13.750px "Liberation Sans", Arial, sans-serif; fill: #555; stroke: #fff; stroke-width: 4.500px; paint-order: stroke; stroke-linejoin: round; }
.bottom { display: flex; flex: 1; border-top: 1px solid #d9dbdc; background: #f6fafb; }
h2 { font-size: 14.800px; font-weight: 400; height: 43px; line-height: 42px; background: #fff; border-bottom: 1px solid #d9dbdc; padding-left: 15px; letter-spacing: -.15px; -webkit-text-stroke: .2px #000; }
.recipes { width: 502px; border-right: 1px solid #dcdfe0; }
.recipe { height: 51.400px; background: #fff; border-bottom: 1px solid #e9ebec; display: flex; align-items: center; justify-content: space-between; padding: 0 38px 0 30px; font-size: 17.300px; letter-spacing: -.16px; -webkit-text-stroke: .3px #000; }
.r3, .r4 { letter-spacing: .1px; }
.recipe svg { fill: none; stroke: #aaa; stroke-width: 1.800; margin-top: -1px; }
.logs { width: 480px; }
.logs h2 { padding-left: 16px; }
.empty { display: flex; flex-direction: column; align-items: center; padding-top: 123px; gap: 22px; font-size: 19px; color: #9c9c9c; letter-spacing: 0; white-space: nowrap; }

/* taskbar */
.taskbar { height: 60px; flex: none; background: #dcdcdc; border-top: 1px solid #a9a9a9; display: flex; position: relative; }
.weather { width: 640px; flex: none; padding: 8px 0 0 24px; display: flex; gap: 4px; font-size: 14.500px; letter-spacing: -.3px; }
.weather span { display: block; line-height: 20.500px; color: #111; }
.weather .gray { color: #555; }
.badge { font-size: 12px; fill: #fff; text-anchor: middle; }
.apps { display: flex; align-items: center; width: 650px; flex: none; }
.search { width: 274px; flex: none; height: 39px; border-radius: 20px; background: #f6f6f6; border: 1px solid #c6c6c6; margin: 0 15px 0 16px; display: flex; align-items: center; padding-left: 13px; gap: 11px; font-size: 17px; letter-spacing: -.3px; color: #555; }
.search .art { margin-left: auto; margin-right: 7px; }
.apps > svg + svg { margin-left: 27px; }
.app { flex: none; display: flex; align-items: center; justify-content: center; position: relative; width: 48px; height: 48px; margin-left: 16px; }
.app + svg { margin-left: 16px; }
.run { position: absolute; bottom: -1px; width: 7px; height: 4px; border-radius: 2px; background: #808080; }
.run.wide { width: 20px; background: #0a78d4; }
.current { background: #f0f0f0; border: 1px solid #e6e6e6; border-radius: 5px; }
.current svg { margin: -12px 0 0 8px; }
.current + .app { margin-left: 7px; }
.tray { display: flex; align-items: center; margin-left: auto; padding-right: 24px; font-size: 14.500px; letter-spacing: -.05px; color: #1a1a1a; }
.tray span { display: block; line-height: 20px; }
.tray > svg:nth-child(2) { margin-left: 23px; }
.lang { width: 36px; text-align: center; margin: 0 20px 0 19px; letter-spacing: -.2px; }
.tray > svg:nth-child(5) { margin-left: 9px; }
.tray > svg:nth-child(6) { margin-left: 9px; }
.clock { width: 82px; text-align: right; margin: 0 11px 0 15px; }
.copilot { margin-left: 22px; }
.pre { font: 800 9.500px "Open Sans", sans-serif; text-anchor: middle; fill: #222; }
```
FILE: tree.js
```js
// Dendrogram: leaves sit on a regular grid, parents at the mean of their children.
const C = { blue: '#4e79a7', orange: '#f28e2c', red: '#e15759', teal: '#76b7b2', green: '#59a14f', yellow: '#edc949', purple: '#af7aa1', pink: '#ff9da7' };
const n = (name, ...kids) => ({ name, kids });
const leaves = s => s.split(' ').map(x => n(x));
const viz = n('viz', n('stack', ...leaves('cchart xAxis yAxis layers')),
  n('ppie', n('chart', n('pie', ...leaves('outline slices bbox')), n('donut'), n('gauge')), n('legends')));
const root = n('nivo', viz,
  n('colors', ...leaves('rgb hsl')),
  n('utils', ...leaves('randomize resetClock noop tick forceGC stackTrace dbg')),
  n('generators', ...leaves('address city animal movie user')),
  n('set', ...leaves('clone intersect merge reverse toArray toObject fromCSV slice append prepend shuffle pick plouc')),
  n('text', ...leaves('trim slugify snakeCase camelCase repeat padLeft padRight sanitize ploucify')),
  n('misc', n('greetings', ...leaves('hey HOWDY aloha AHOY')), n('other'),
    n('path', n('pathA'), n('pathB', ...leaves('pathB1 pathB2 pathB3 pathB4')),
      n('pathC', ...leaves('pathC1 pathC2 pathC3 pathC4 pathC5 pathC6 pathC7 pathC8 pathC9')))));
const hues = ['orange', 'red', 'teal', 'green', 'yellow', 'purple', 'pink'];
const X0 = 1018.2, STEP = 9.854, Y0 = 354.4, ROW = 43.75;
let slot = 0, prev = null;
const all = [], links = [];
function place(node, parent, color) {
  node.color = color;
  node.kids.forEach((k, i) => place(k, node, parent ? color : C[hues[i]]));
  if (!node.kids.length) {
    if (prev) slot += prev === parent ? 1 : 2;
    prev = parent;
    node.x = X0 + slot * STEP;
    node.h = 0;
  } else {
    node.x = node.kids.reduce((s, k) => s + k.x, 0) / node.kids.length;
    node.h = 1 + Math.max(...node.kids.map(k => k.h));
  }
}
place(root, null, C.blue);
(function walk(d) {
  d.y = Y0 + (5 - d.h) * ROW;
  all.push(d);
  d.kids.forEach(k => { links.push([d, k]); walk(k); });
})(root);
let out = '';
for (const [a, b] of links) {
  const m = (a.y + b.y) / 2;
  out += `<path class="link" stroke="${b.color}" d="M${a.x} ${a.y}C${a.x} ${m} ${b.x} ${m} ${b.x} ${b.y}"/>`;
}
for (const d of all) out += `<circle cx="${d.x}" cy="${d.y}" r="7.5" fill="${d.color}"/>`;
for (const d of all) {
  const leaf = !d.kids.length;
  out += `<text class="lbl" text-anchor="${leaf ? 'end' : 'start'}" dy="4" transform="translate(${d.x} ${d.y + (leaf ? 15 : -15)}) rotate(-90)">${d.name}</text>`;
}
document.getElementById('tree').innerHTML = out;
```
